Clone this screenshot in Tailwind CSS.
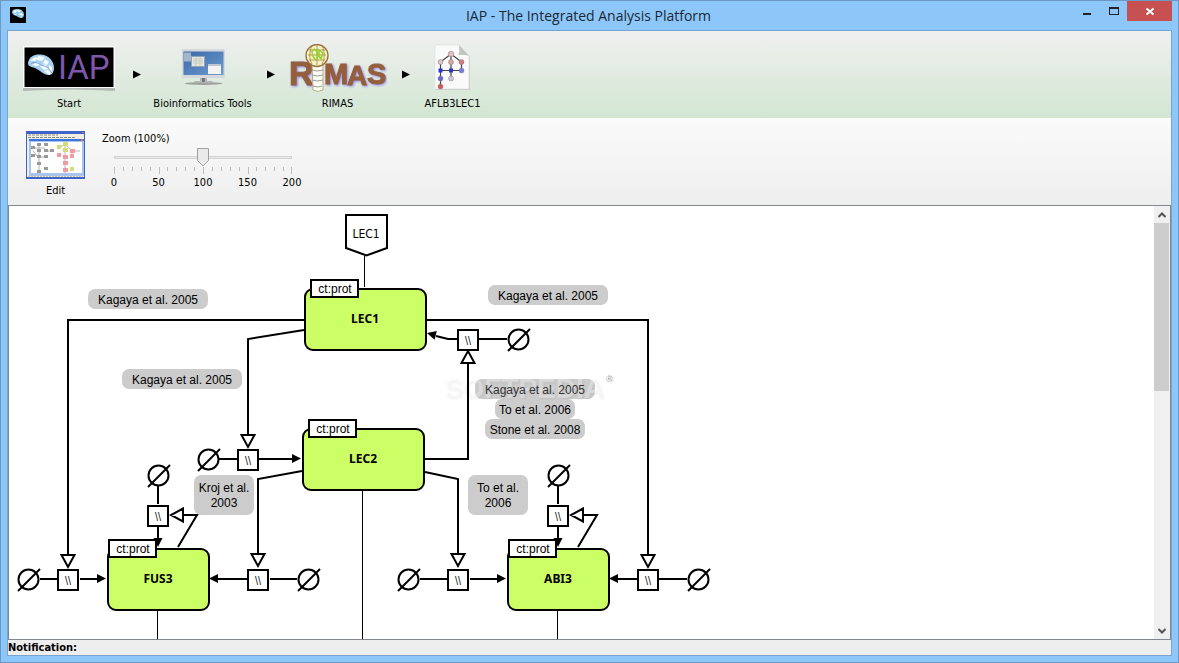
<!DOCTYPE html>
<html lang="en">
<head>
  <meta charset="UTF-8" />
  <meta name="viewport" content="width=device-width, initial-scale=1.0" />
  <title>IAP - The Integrated Analysis Platform</title>
  <script src="https://cdn.jsdelivr.net/npm/@tailwindcss/browser@4"></script>
</head>
<body class="flex h-screen flex-col overflow-hidden border border-[#6b98c5] bg-[#8dc7fa] font-['DejaVu_Sans_Condensed','DejaVu_Sans',sans-serif] text-[11px] leading-4 text-black">

  <!-- Title bar -->
  <header class="grid h-[29px] shrink-0 grid-cols-[1fr_auto_1fr] items-start pr-[6px] pl-1">
    <svg class="mt-[6px] ml-[5px] h-4 w-4" viewBox="0 0 16 16" aria-hidden="true">
      <rect width="16" height="16" fill="#000" />
      <path d="M2 5C2 2.500 5 1.500 8 2c3.500.3 6 2.500 6 5.500 0 2-1 3.500-2.500 3.500C9 11 7 9 5 8.500 3.500 8 2 7 2 5z" fill="#8fc4ea" />
      <path d="M3 5l2-2 2 1-2 2zM6 3l5 .5-2 2zM8 7l4-1 1 3zM10 9l2 1-1 .5zM4 7l3-.5-1 1.500z" fill="#fff" />
    </svg>
    <h1 class="font-['Open_Sans',sans-serif] text-sm leading-[29px] text-[#1b2733]">IAP - The Integrated Analysis Platform</h1>
    <div class="flex justify-end">
      <button type="button" aria-label="Minimize" class="flex h-5 w-7 items-center justify-center">
        <svg class="h-5 w-7" viewBox="0 0 28 20"><path d="M8 12h8v2H8z" fill="#222" /></svg>
      </button>
      <button type="button" aria-label="Maximize" class="h-5 w-6">
        <svg class="h-5 w-6" viewBox="0 0 24 20"><path d="M6 6h10v8H6zM7 8v5h8V8z" fill="#222" fill-rule="evenodd" /></svg>
      </button>
      <button type="button" aria-label="Close" class="h-5 w-[45px] bg-[#c75050]">
        <svg class="h-5 w-[45px]" viewBox="0 0 45 20"><path d="M19.500 7.500l7 6M26.500 7.500l-7 6" stroke="#fff" stroke-width="2" /></svg>
      </button>
    </div>
  </header>

  <main class="mx-[6px] mb-[6px] flex min-h-0 flex-1 flex-col border border-[#76a5d2] bg-[#eee]">

    <!-- Navigation path -->
    <nav class="flex h-[87px] shrink-0 items-start bg-linear-to-b from-[#f0f0f0] to-[#d2e6d2] pt-[13px] pl-[15px]">
      <button type="button" class="flex w-[92px] flex-col items-center gap-1">
        <svg class="h-12 w-[94px]" viewBox="0 0 94 48" aria-hidden="true">
          <path d="M1 44q46-4 92 0v3q-46-3-92 0z" fill="#b4b9b4" />
          <rect x="1" y="2" width="92" height="42" fill="#fbfbfb" />
          <rect x="2.500" y="3.500" width="89" height="39.500" fill="#000" />
          <path d="M6 19C7 12 13 10 19 10.500c8 .7 13 7 13 13 0 5-2 7.500-5 7.500-6 0-9-5-14-7-4-1.300-7-1.500-7-5z" fill="#a9d0ee" />
          <path d="M8 17l5-4 3 1-3 3zM16 12l7 1-3 4-5-1zM23 15l4 3-2 3-4-2zM10 21l5-3 4 3-5 1zM18 22l5-2 4 5-5 1zM27 21l3 2v5l-3-1zM22 27l4-1 3 3-2 2z" fill="#f4faff" />
          <path d="M9 20c5-4 8 1 13 2s6 5 8 7" stroke="#5b92c8" stroke-width=".8" fill="none" />
          <text x="36" y="35" font-family="Roboto, sans-serif" font-size="33" fill="#7e57ad">IAP</text>
        </svg>
        <span>Start</span>
      </button>
      <svg class="mt-[26px] h-[9px] w-10" viewBox="0 0 40 9" aria-hidden="true"><path d="M18 0.500v8l8-4z" fill="#000" /></svg>

      <button type="button" class="flex w-[95px] flex-col items-center gap-1 whitespace-nowrap">
        <svg class="h-12 w-12" viewBox="0 0 48 48" aria-hidden="true">
          <defs><linearGradient id="screen" x1="0" y1="0" x2="1" y2="1"><stop offset="0" stop-color="#3a68a8" /><stop offset="1" stop-color="#6d9dd0" /></linearGradient></defs>
          <ellipse cx="24.500" cy="39.500" rx="19" ry="1.500" fill="#9ca19c" />
          <path d="M21 33h7v4h5l2 2H14l2-2h5z" fill="#b2b5b5" />
          <path d="M23 33h3v5h-3z" fill="#777" />
          <rect x="3" y="5" width="43" height="29" rx="1" fill="#d6d9db" />
          <rect x="4.500" y="7.500" width="40" height="23.500" fill="url(#screen)" />
          <path d="M5 8.500h7v9H5z" fill="#a4b6cb" />
          <rect x="12.500" y="12.500" width="13" height="10" fill="#e7e7df" stroke="#91a5ba" />
          <path d="M14 15h10M14 17h10M14 19h10M17 13v9M21 13v9" stroke="#bcc3bd" stroke-width=".7" />
          <rect x="29" y="20" width="13" height="10" fill="#f3f3f1" />
          <path d="M29 20h13v2H29z" fill="#bfc4d0" />
        </svg>
        <span>Bioinformatics Tools</span>
      </button>
      <svg class="mt-[26px] h-[9px] w-10" viewBox="0 0 40 9" aria-hidden="true"><path d="M17 0.500v8l8-4z" fill="#000" /></svg>

      <button type="button" class="flex w-[95px] flex-col items-center gap-1">
        <svg class="h-12 w-[98px]" viewBox="0 0 98 48" aria-hidden="true" font-family="Liberation Sans, sans-serif" font-weight="bold">
          <g class="drop-shadow-[1px_1px_1px_#8f88ee]" fill="#955f3c" stroke="#955f3c">
            <text x="0" y="41" font-size="34" stroke-width="1">R<tspan x="35" y="40" font-size="29">M</tspan><tspan x="58" y="41" font-size="28">A</tspan><tspan x="78" y="40" font-size="29">S</tspan></text>
          </g>
          <path d="M23 20h11v26q-5 3-10 0z" fill="#fbfcf4" stroke="#b7ab87" />
          <path d="M23 26q5 2 11 0M23 31q5 2 11 0M23 36q5 2 11 0M24 42q5 2 9 0" stroke="#999d8f" fill="none" />
          <circle cx="28" cy="11.500" r="11" fill="#f6f4c7" stroke="#9a713a" stroke-width="1.300" />
          <path d="M19 11h18M20 6h16M20 16h16M28 1v20M23 2c-3 6-3 13 0 18M33 2c3 6 3 13 0 18" stroke="#a98344" stroke-width=".8" fill="none" />
          <path d="M23 7q3-4 5 1 2 4-1 8-4-3-4-9zM30 6l4 3-2 6-2-3z" fill="none" stroke="#93d42c" stroke-width="1.500" />
        </svg>
        <span>RIMAS</span>
      </button>
      <svg class="mt-[26px] h-[9px] w-10" viewBox="0 0 40 9" aria-hidden="true"><path d="M17 0.500v8l8-4z" fill="#000" /></svg>

      <button type="button" class="flex w-[55px] flex-col items-center gap-1">
        <svg class="h-12 w-10" viewBox="0 0 40 48" aria-hidden="true">
          <path d="M3 2h24l10 11v33H3z" fill="#aaa" opacity=".5" />
          <path d="M2 1h24l10 11v33H2z" fill="#fafafa" stroke="#dedede" stroke-width=".7" />
          <path d="M26 1q1 9-1 10 5-1 11 1z" fill="#c2c4c2" />
          <path d="M18 10L7.500 18v25M18 10v25M18 10l10.500 8v8.500h-21" fill="none" stroke="#454545" stroke-width="1.200" />
          <g stroke="#807d88" stroke-width=".5">
            <circle cx="18" cy="10" r="2.800" fill="#e3bebe" /><circle cx="7.500" cy="18" r="2.500" fill="#ddc5c5" />
            <circle cx="18" cy="18" r="2.500" fill="#dfa3a5" /><circle cx="28.500" cy="18" r="2.500" fill="#d87879" />
            <circle cx="28.500" cy="26.500" r="2.500" fill="#757bdd" /><circle cx="7.500" cy="34.500" r="2.500" fill="#6068d8" />
            <circle cx="18" cy="34.500" r="2.500" fill="#c6c7df" /><circle cx="7.500" cy="42.500" r="2.500" fill="#d85555" />
          </g>
          <path d="M5.500 24.500h4v4h-4zM16 24.500h4v4h-4z" fill="#2538d4" />
        </svg>
        <span>AFLB3LEC1</span>
      </button>
    </nav>

    <!-- Tools -->
    <section class="flex h-[87px] shrink-0 items-start gap-[17px] bg-linear-to-b from-[#fbfbfb] to-[#eee] pt-[13px] pl-[18px]">
      <button type="button" class="flex flex-col items-center gap-1">
        <svg class="h-12 w-[59px]" viewBox="0 0 59 48" aria-hidden="true">
          <rect width="59" height="48" fill="#3f63cb" />
          <rect x="1" y="3" width="57" height="43" fill="#f0eee0" />
          <path d="M2 4h30M2 6.500h47" stroke="#8b8b85" stroke-dasharray="3 1" />
          <path d="M3 8h55v37H3z" fill="#a9c5ee" />
          <path d="M3 8h55v2H3z" fill="#3b74df" />
          <path d="M56 1h2v1h-2zM55 8h2v2h-2z" fill="#e66a54" />
          <path d="M5 11h51v31H5z" fill="#fff" />
          <path d="M2 45.500h55" stroke="#cac79c" stroke-dasharray="2 1" />
          <path d="M7 17h12M13 14v26M7 20l5 6h8M39 13v29M33 17l6-4 7 7v7M46 20h8M20 20h8" stroke="#b5b5b5" fill="none" />
          <path d="M11 12h4v3h-4zM18 12h4v3h-4zM5 15h4v3H5zM11 18h4v3h-4zM18 18h4v3h-4zM24 18h4v3h-4zM5 23h4v3H5zM11 24h4v3h-4zM18 24h4v3h-4zM11 31h4v3h-4zM11 39h4v3h-4zM18 36h4v3h-4z" fill="#999" />
          <path d="M37 11h5v4h-5zM31 14h4v4h-4zM37 17h5v4h-5zM44 36h4v4h-4z" fill="#d5dc74" />
          <path d="M31 22h4v4h-4zM44 18h5v4h-5zM44 23h4v4h-4zM37 24h5v4h-5zM37 30h5v4h-5zM37 37h5v4h-5z" fill="#f29aa2" />
        </svg>
        <span>Edit</span>
      </button>

      <div class="flex w-[202px] flex-col">
        <label for="zoom" id="zoomLabel">Zoom (100%)</label>
        <div class="relative mx-3 h-5">
          <input type="range" id="zoom" min="0" max="200" value="100" class="absolute inset-x-0 top-[9px] h-[3px] w-full cursor-pointer appearance-none border border-[#d3d3d3] bg-[#e7eaea] [&::-webkit-slider-thumb]:h-5 [&::-webkit-slider-thumb]:w-3 [&::-webkit-slider-thumb]:appearance-none [&::-webkit-slider-thumb]:opacity-0" />
          <svg id="knob" class="pointer-events-none absolute top-px left-1/2 h-5 w-3 -translate-x-1/2" viewBox="0 0 12 20" aria-hidden="true">
            <path d="M.5.500h11v12L6 18 .5 12.500z" fill="#eaeaea" stroke="#a0a0a0" />
          </svg>
        </div>
        <svg class="mx-3 h-2" viewBox="0 0 178 8" preserveAspectRatio="none" aria-hidden="true">
          <path d="M.5 0v7M45.500 0v7M89.500 0v7M134.500 0v7M177.500 0v7" stroke="#bdbdbd" />
          <path d="M9.500 0v4M18.500 0v4M27.500 0v4M36.500 0v4M53.500 0v4M62.500 0v4M71.500 0v4M80.500 0v4M98.500 0v4M107.500 0v4M116.500 0v4M125.500 0v4M142.500 0v4M151.500 0v4M160.500 0v4M169.500 0v4" stroke="#bdbdbd" />
        </svg>
        <div class="flex justify-between text-center">
          <span class="w-6">0</span><span class="w-6">50</span><span class="w-6">100</span><span class="w-6">150</span><span class="w-6">200</span>
        </div>
      </div>
    </section>

    <!-- Pathway view -->
    <section class="flex min-h-0 flex-1 border border-[#828790] bg-white">
      <div class="min-w-0 flex-1 overflow-hidden">
        <svg class="h-[433px] w-[720px]" viewBox="9 206 720 433" fill="none" stroke="#000" stroke-width="2" role="img" aria-label="Regulatory pathway of LEC1, LEC2, FUS3 and ABI3">
          <defs>
            <g id="sink"><circle r="10" /><path d="M-10.500 11.500L11.500 -10.500" /></g>
            <rect id="gate" x="-10" y="-10" width="20" height="20" fill="#fff" />
            <path id="down" d="M-6.500 0h13L0 12z" fill="#fff" />
            <path id="solid" d="M0 0l-9-4.500v9z" fill="#000" stroke="none" />
            <rect id="gene" width="121" height="61" rx="8" fill="#cf6" />
            <rect id="geneSmall" width="101" height="61" rx="8" fill="#cf6" />
            <rect id="tag" width="47" height="17" fill="#fff" />
          </defs>

          <!-- reference labels -->
          <g fill="#ccc" stroke="none">
            <rect x="88" y="289" width="120" height="20" rx="7" />
            <rect x="488" y="285" width="120" height="20" rx="7" />
            <rect x="122" y="369" width="120" height="20" rx="7" />
            <rect x="475" y="379" width="120" height="20" rx="7" />
            <rect x="495" y="399" width="80" height="20" rx="7" />
            <rect x="485" y="419" width="100" height="20" rx="7" />
            <rect x="194" y="475" width="60" height="40" rx="7" />
            <rect x="468" y="475" width="60" height="40" rx="7" />
          </g>

          <!-- watermark -->
          <g class="drop-shadow-[1px_1px_1px_#00000030]" fill="#fff" fill-opacity=".35" stroke="none" font-family="Liberation Sans, sans-serif" font-weight="bold">
            <text x="444" y="398" font-size="28">SOFTPEDIA</text>
            <text x="606" y="382" font-size="9" fill="#bbb" fill-opacity="1">®</text>
          </g>

          <!-- edges -->
          <path d="M304 320H68V555M427 320H648V555M304 330L248 339V434M302 471L258 479V554M425 472L458 479V554M425 459H468V364" />
          <path d="M457 339H448L436 336" />
          <path d="M219 459H237M259 459H292M479 339H507M40 579H58M80 579H97M218 579H248M270 579H297M420 579H447M470 579H497M618 579H638M659 579H687" />
          <path d="M158 486V504M158 527V539M183 515H197L178 547M558 486V504M558 527V539M583 515H597L578 547" />
          <path d="M364.500 256V287M362.500 491V639M157.500 611V639M557.500 611V639" stroke-width="1" />

          <!-- genes -->
          <path d="M346 215H387V248L366.500 255.500L346 248Z" fill="#fff" />
          <use href="#gene" x="305" y="289" />
          <use href="#gene" x="303" y="429" />
          <use href="#geneSmall" x="108" y="549" />
          <use href="#geneSmall" x="508" y="549" />
          <use href="#tag" x="311" y="280" />
          <use href="#tag" x="309" y="420" />
          <use href="#tag" x="109" y="540" />
          <use href="#tag" x="509" y="540" />

          <!-- sinks and gates -->
          <use href="#sink" x="518.500" y="339.500" />
          <use href="#sink" x="208.500" y="459.500" />
          <use href="#sink" x="158.500" y="475.500" />
          <use href="#sink" x="558.500" y="475.500" />
          <use href="#sink" x="28.500" y="579.500" />
          <use href="#sink" x="308.500" y="579.500" />
          <use href="#sink" x="408.500" y="579.500" />
          <use href="#sink" x="698.500" y="579.500" />
          <use href="#gate" x="468" y="340" />
          <use href="#gate" x="248" y="460" />
          <use href="#gate" x="158" y="516" />
          <use href="#gate" x="558" y="516" />
          <use href="#gate" x="68" y="580" />
          <use href="#gate" x="258" y="580" />
          <use href="#gate" x="458" y="580" />
          <use href="#gate" x="648" y="580" />

          <!-- arrow heads -->
          <use href="#down" x="248" y="435" />
          <use href="#down" x="68" y="555" />
          <use href="#down" x="648" y="555" />
          <use href="#down" x="258" y="554" />
          <use href="#down" x="458" y="554" />
          <path d="M461.500 363h13L468 351zM183 508.500v13L171 515zM583 508.500v13L571 515z" fill="#fff" />
          <use href="#solid" x="301" y="458.500" />
          <use href="#solid" x="106" y="578.500" />
          <use href="#solid" x="506" y="578.500" />
          <use href="#solid" transform="translate(209 578.500) rotate(180)" />
          <use href="#solid" transform="translate(609 578.500) rotate(180)" />
          <use href="#solid" transform="translate(427 333) rotate(195)" />
          <use href="#solid" transform="translate(158 547) rotate(90)" />
          <use href="#solid" transform="translate(558 547) rotate(90)" />

          <g fill="#000" stroke="none" text-anchor="middle" font-family="Liberation Sans, sans-serif" font-size="12">
            <text x="148" y="304">Kagaya et al. 2005</text>
            <text x="548" y="300">Kagaya et al. 2005</text>
            <text x="182" y="384">Kagaya et al. 2005</text>
            <text x="535" y="394" fill="#333">Kagaya et al. 2005</text>
            <text x="535" y="414">To et al. 2006</text>
            <text x="535" y="434">Stone et al. 2008</text>
            <text x="224" y="492">Kroj et al.</text>
            <text x="224" y="507">2003</text>
            <text x="498" y="492">To et al.</text>
            <text x="498" y="507">2006</text>
            <text x="335" y="293">ct:prot</text>
            <text x="333" y="433">ct:prot</text>
            <text x="133" y="553">ct:prot</text>
            <text x="533" y="553">ct:prot</text>
          </g>
          <g fill="#000" stroke="none" text-anchor="middle" font-family="DejaVu Sans Condensed, DejaVu Sans, sans-serif" font-size="12">
            <text x="366" y="238">LEC1</text>
            <g font-size="10">
              <text x="468" y="344">\\</text>
              <text x="248" y="464">\\</text>
              <text x="158" y="520">\\</text>
              <text x="558" y="520">\\</text>
              <text x="68" y="584">\\</text>
              <text x="258" y="584">\\</text>
              <text x="458" y="584">\\</text>
              <text x="648" y="584">\\</text>
            </g>
          </g>
          <g fill="#000" stroke="none" text-anchor="middle" font-family="Noto Sans, sans-serif" font-size="12" font-weight="bold">
            <text x="365" y="323">LEC1</text>
            <text x="363" y="463">LEC2</text>
            <text x="158" y="583">FUS3</text>
            <text x="558" y="583">ABI3</text>
          </g>
        </svg>
      </div>

      <!-- Scroll bar -->
      <div class="flex w-4 flex-col bg-[#f0f0f0] pr-px">
        <button type="button" aria-label="Scroll up" class="flex h-[17px] shrink-0 items-center justify-center">
          <svg class="h-2 w-2" viewBox="0 0 8 8"><path d="M.5 6L4 2.500 7.500 6" fill="none" stroke="#555" stroke-width="2" /></svg>
        </button>
        <div class="flex-1"><div class="h-[42%] bg-[#cdcdcd]"></div></div>
        <button type="button" aria-label="Scroll down" class="flex h-[17px] shrink-0 items-center justify-center">
          <svg class="h-2 w-2" viewBox="0 0 8 8"><path d="M.5 2L4 5.500 7.500 2" fill="none" stroke="#555" stroke-width="2" /></svg>
        </button>
      </div>
    </section>

    <footer class="h-[15px] shrink-0 font-bold">Notification:</footer>
  </main>

  <script>
    // keep the caption and the knob in step with the slider
    const zoom = document.getElementById('zoom');
    zoom.addEventListener('input', () => {
      document.getElementById('zoomLabel').textContent = `Zoom (${zoom.value}%)`;
      document.getElementById('knob').style.left = `${zoom.value / 2}%`;
    });
  </script>
</body>
</html>
